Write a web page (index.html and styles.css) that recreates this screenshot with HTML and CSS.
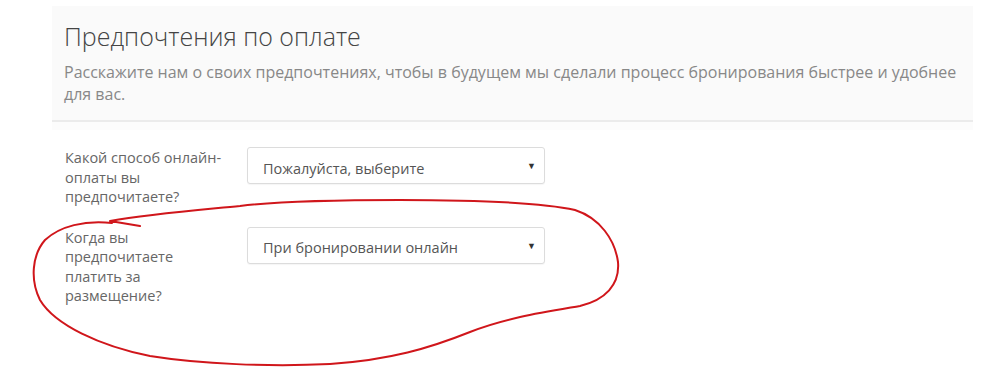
FILE: index.html
```html
<!DOCTYPE html>
<html lang="ru">
<head>
    <meta charset="UTF-8">
    <meta name="viewport" content="width=device-width, initial-scale=1.0">
    <title>Предпочтения по оплате</title>
    <link rel="stylesheet" href="styles.css">
</head>
<body>
    <div class="page">
        <!-- Заголовок раздела -->
        <div class="page-header">
            <h1>Предпочтения по оплате</h1>
            <p>Расскажите нам о своих предпочтениях, чтобы в будущем мы сделали процесс бронирования быстрее и удобнее для вас.</p>
        </div>

        <!-- Форма -->
        <form class="pref-form">
            <div class="form-row">
                <label for="payMethod">Какой способ онлайн-оплаты вы предпочитаете?</label>
                <div class="select-wrap">
                    <select id="payMethod">
                        <option>Пожалуйста, выберите</option>
                    </select>
                </div>
            </div>
            <div class="form-row">
                <label for="payTime">Когда вы предпочитаете платить за размещение?</label>
                <div class="select-wrap">
                    <select id="payTime">
                        <option>При бронировании онлайн</option>
                    </select>
                </div>
            </div>
        </form>

        <!-- пометка от руки -->
        <svg class="scribble" width="986" height="384" viewBox="0 0 986 384">
            <path d="M140,226 L110,221 C150,214 200,210 240,206 C280,201 330,200 400,200 C470,200 540,202 575,210 C600,218 615,240 618,262 C620,285 605,300 580,306 C545,312 505,318 470,332 C430,348 390,360 330,364 C270,367 200,364 150,356 C100,346 55,325 40,300 C30,280 32,255 45,240 C60,226 85,220 112,223"
                  fill="none" stroke="#d0161b" stroke-width="2" stroke-linecap="round" stroke-linejoin="round"/>
        </svg>
    </div>
</body>
</html>
```

FILE: styles.css
```css
body {
    margin: 0;
    background-color: #fff;
    font-family: "Open Sans", "Liberation Sans", sans-serif;
}

.page {
    position: relative;
    width: 986px;
    height: 384px;
    padding: 6px 0 0 52px;
    box-sizing: border-box;
}

.page-header {
    width: 921px;
    box-sizing: border-box;
    background-color: #fafafa;
    border-bottom: 2px solid #ebebeb;
    box-shadow: 0 8px 0 #fcfcfc;
    padding: 15px 12px 15px;
}

.page-header h1 {
    margin: 0;
    font-size: 25px;
    font-weight: 300;
    line-height: 31px;
    color: #444;
}

.page-header p {
    margin: 9px 0 0;
    font-size: 16px;
    line-height: 22px;
    color: #888;
}

.pref-form {
    padding: 25px 0 0 13px;
}

.form-row {
    display: flex;
    align-items: flex-start;
    margin-bottom: 20px;
}

.form-row label {
    flex: 0 0 182px;
    box-sizing: border-box;
    padding: 1px 22px 0 0;
    font-size: 14.5px;
    line-height: 19.5px;
    color: #666;
}

.select-wrap {
    position: relative;
    width: 298px;
}

.select-wrap select {
    width: 100%;
    height: 37px;
    padding: 5px 30px 0 15px;
    border: 1px solid #dcdcdc;
    border-radius: 3px;
    background-color: #fff;
    box-shadow: 0 1px 1px rgba(0, 0, 0, 0.04);
    font-family: inherit;
    font-size: 14.5px;
    color: #555;
    -webkit-appearance: none;
    appearance: none;
}

.select-wrap::after {
    content: "▼";
    position: absolute;
    right: 9px;
    top: 12px;
    font-size: 9px;
    color: #333;
    pointer-events: none;
}

.scribble {
    position: absolute;
    left: 0;
    top: 0;
    pointer-events: none;
}
```
